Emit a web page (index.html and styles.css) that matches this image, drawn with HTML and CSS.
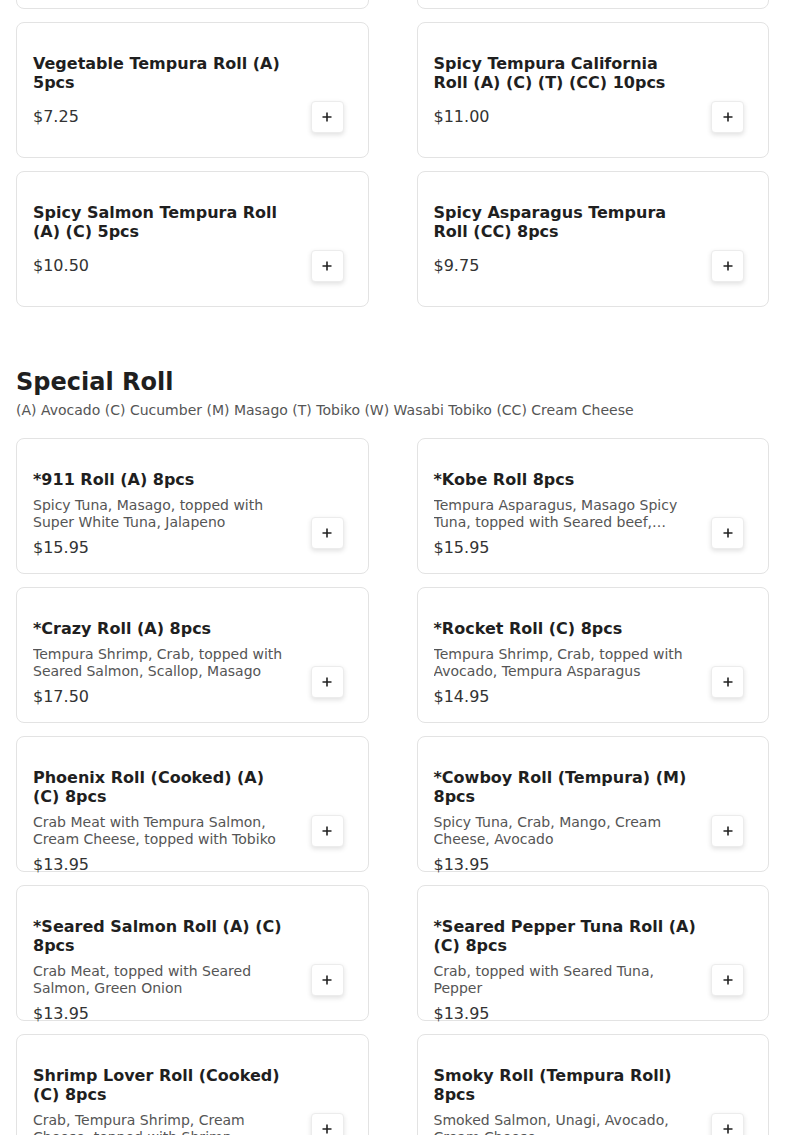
FILE: index.html
```html
<!DOCTYPE html>
<html lang="en">
<head>
<meta charset="utf-8">
<title>Menu</title>
<link rel="stylesheet" href="styles.css">
</head>
<body>
<main class="menu">
  <section class="section section-first">
    <div class="grid">
      <article class="card"><div class="info"><h3 class="name">Shrimp Tempura Roll (A) (C) 5pcs</h3><p class="price">$7.95</p></div><button class="add" aria-label="Add"><svg viewBox="0 0 12 12" width="12" height="12"><path d="M6 1.5v9M1.5 6h9" stroke="#222" stroke-width="1.6" fill="none"/></svg></button></article>
      <article class="card"><div class="info"><h3 class="name">Chicken Tempura Roll (A) (C) 5pcs</h3><p class="price">$7.50</p></div><button class="add" aria-label="Add"><svg viewBox="0 0 12 12" width="12" height="12"><path d="M6 1.5v9M1.5 6h9" stroke="#222" stroke-width="1.6" fill="none"/></svg></button></article>
      <article class="card"><div class="info"><h3 class="name">Vegetable Tempura Roll (A) 5pcs</h3><p class="price">$7.25</p></div><button class="add" aria-label="Add"><svg viewBox="0 0 12 12" width="12" height="12"><path d="M6 1.5v9M1.5 6h9" stroke="#222" stroke-width="1.6" fill="none"/></svg></button></article>
      <article class="card"><div class="info"><h3 class="name">Spicy Tempura California Roll (A) (C) (T) (CC) 10pcs</h3><p class="price">$11.00</p></div><button class="add" aria-label="Add"><svg viewBox="0 0 12 12" width="12" height="12"><path d="M6 1.5v9M1.5 6h9" stroke="#222" stroke-width="1.6" fill="none"/></svg></button></article>
      <article class="card"><div class="info"><h3 class="name">Spicy Salmon Tempura Roll (A) (C) 5pcs</h3><p class="price">$10.50</p></div><button class="add" aria-label="Add"><svg viewBox="0 0 12 12" width="12" height="12"><path d="M6 1.5v9M1.5 6h9" stroke="#222" stroke-width="1.6" fill="none"/></svg></button></article>
      <article class="card"><div class="info"><h3 class="name">Spicy Asparagus Tempura Roll (CC) 8pcs</h3><p class="price">$9.75</p></div><button class="add" aria-label="Add"><svg viewBox="0 0 12 12" width="12" height="12"><path d="M6 1.5v9M1.5 6h9" stroke="#222" stroke-width="1.6" fill="none"/></svg></button></article>
    </div>
  </section>

  <section class="section">
    <h2 class="section-title">Special Roll</h2>
    <p class="section-note">(A) Avocado (C) Cucumber (M) Masago (T) Tobiko (W) Wasabi Tobiko (CC) Cream Cheese</p>
    <div class="grid">
      <article class="card"><div class="info"><h3 class="name">*911 Roll (A) 8pcs</h3><p class="desc">Spicy Tuna, Masago, topped with Super White Tuna, Jalapeno</p><p class="price">$15.95</p></div><button class="add" aria-label="Add"><svg viewBox="0 0 12 12" width="12" height="12"><path d="M6 1.5v9M1.5 6h9" stroke="#222" stroke-width="1.6" fill="none"/></svg></button></article>
      <article class="card"><div class="info"><h3 class="name">*Kobe Roll 8pcs</h3><p class="desc">Tempura Asparagus, Masago Spicy Tuna, topped with Seared beef, Scallion, Eel Sauce</p><p class="price">$15.95</p></div><button class="add" aria-label="Add"><svg viewBox="0 0 12 12" width="12" height="12"><path d="M6 1.5v9M1.5 6h9" stroke="#222" stroke-width="1.6" fill="none"/></svg></button></article>
      <article class="card"><div class="info"><h3 class="name">*Crazy Roll (A) 8pcs</h3><p class="desc">Tempura Shrimp, Crab, topped with Seared Salmon, Scallop, Masago</p><p class="price">$17.50</p></div><button class="add" aria-label="Add"><svg viewBox="0 0 12 12" width="12" height="12"><path d="M6 1.5v9M1.5 6h9" stroke="#222" stroke-width="1.6" fill="none"/></svg></button></article>
      <article class="card"><div class="info"><h3 class="name">*Rocket Roll (C) 8pcs</h3><p class="desc">Tempura Shrimp, Crab, topped with Avocado, Tempura Asparagus</p><p class="price">$14.95</p></div><button class="add" aria-label="Add"><svg viewBox="0 0 12 12" width="12" height="12"><path d="M6 1.5v9M1.5 6h9" stroke="#222" stroke-width="1.6" fill="none"/></svg></button></article>
      <article class="card"><div class="info"><h3 class="name">Phoenix Roll (Cooked) (A) (C) 8pcs</h3><p class="desc">Crab Meat with Tempura Salmon, Cream Cheese, topped with Tobiko</p><p class="price">$13.95</p></div><button class="add" aria-label="Add"><svg viewBox="0 0 12 12" width="12" height="12"><path d="M6 1.5v9M1.5 6h9" stroke="#222" stroke-width="1.6" fill="none"/></svg></button></article>
      <article class="card"><div class="info"><h3 class="name">*Cowboy Roll (Tempura) (M) 8pcs</h3><p class="desc">Spicy Tuna, Crab, Mango, Cream Cheese, Avocado</p><p class="price">$13.95</p></div><button class="add" aria-label="Add"><svg viewBox="0 0 12 12" width="12" height="12"><path d="M6 1.5v9M1.5 6h9" stroke="#222" stroke-width="1.6" fill="none"/></svg></button></article>
      <article class="card"><div class="info"><h3 class="name">*Seared Salmon Roll (A) (C) 8pcs</h3><p class="desc">Crab Meat, topped with Seared Salmon, Green Onion</p><p class="price">$13.95</p></div><button class="add" aria-label="Add"><svg viewBox="0 0 12 12" width="12" height="12"><path d="M6 1.5v9M1.5 6h9" stroke="#222" stroke-width="1.6" fill="none"/></svg></button></article>
      <article class="card"><div class="info"><h3 class="name">*Seared Pepper Tuna Roll (A) (C) 8pcs</h3><p class="desc">Crab, topped with Seared Tuna, Pepper</p><p class="price">$13.95</p></div><button class="add" aria-label="Add"><svg viewBox="0 0 12 12" width="12" height="12"><path d="M6 1.5v9M1.5 6h9" stroke="#222" stroke-width="1.6" fill="none"/></svg></button></article>
      <article class="card"><div class="info"><h3 class="name">Shrimp Lover Roll (Cooked) (C) 8pcs</h3><p class="desc">Crab, Tempura Shrimp, Cream Cheese, topped with Shrimp</p><p class="price">$14.95</p></div><button class="add" aria-label="Add"><svg viewBox="0 0 12 12" width="12" height="12"><path d="M6 1.5v9M1.5 6h9" stroke="#222" stroke-width="1.6" fill="none"/></svg></button></article>
      <article class="card"><div class="info"><h3 class="name">Smoky Roll (Tempura Roll) 8pcs</h3><p class="desc">Smoked Salmon, Unagi, Avocado, Cream Cheese</p><p class="price">$14.95</p></div><button class="add" aria-label="Add"><svg viewBox="0 0 12 12" width="12" height="12"><path d="M6 1.5v9M1.5 6h9" stroke="#222" stroke-width="1.6" fill="none"/></svg></button></article>
    </div>
  </section>
</main>
</body>
</html>
```

FILE: styles.css
```css
html {
  overflow: hidden;
}
body {
  margin: 0;
  background: #fff;
  font-family: "DejaVu Sans", sans-serif;
  color: #1f1f1f;
}
.menu {
  padding: 0 16px;
  margin-top: -127px;
}
.section + .section {
  margin-top: 61px;
}
.grid {
  display: grid;
  grid-template-columns: 1fr 1fr;
  column-gap: 48px;
  row-gap: 13px;
}
.card {
  box-sizing: border-box;
  height: 136px;
  border: 1px solid #e3e3e3;
  border-radius: 8px;
  background: #fff;
  padding: 31px 24px 24px 16px;
  display: flex;
  gap: 15px;
}
.info {
  flex: 1;
  min-width: 0;
  display: flex;
  flex-direction: column;
}
.info > * {
  flex: none;
}
.name {
  margin: 0 0 8px;
  font-size: 16px;
  line-height: 19px;
  font-weight: bold;
  color: #1f1f1f;
}
.desc {
  margin: 0;
  font-size: 14px;
  line-height: 17px;
  color: #555;
  display: -webkit-box;
  -webkit-line-clamp: 2;
  -webkit-box-orient: vertical;
  overflow: hidden;
}
.price {
  margin: 7px 0 0;
  font-size: 16px;
  line-height: 19px;
  color: #333;
}
.add {
  align-self: flex-end;
  flex: none;
  width: 33px;
  height: 32px;
  padding: 0;
  border: 1px solid #ececec;
  border-radius: 4px;
  background: #fff;
  box-shadow: 0 2px 5px rgba(0, 0, 0, 0.12);
  display: flex;
  align-items: center;
  justify-content: center;
}
.add svg {
  display: block;
}
.section-title {
  margin: 0;
  font-size: 24px;
  line-height: 28px;
  font-weight: bold;
  color: #1f1f1f;
}
.section-note {
  margin: 6px 0 19px;
  font-size: 14px;
  line-height: 17px;
  color: #555;
}
```
